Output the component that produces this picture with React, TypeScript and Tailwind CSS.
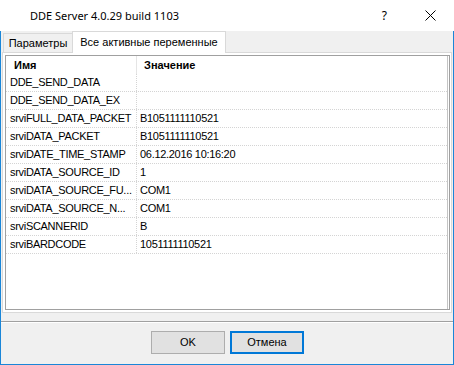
import React from 'react';

const rows: [string, string][] = [
  ['DDE_SEND_DATA', ''],
  ['DDE_SEND_DATA_EX', ''],
  ['srviFULL_DATA_PACKET', 'B1051111110521'],
  ['srviDATA_PACKET', 'B1051111110521'],
  ['srviDATE_TIME_STAMP', '06.12.2016 10:16:20'],
  ['srviDATA_SOURCE_ID', '1'],
  ['srviDATA_SOURCE_FU...', 'COM1'],
  ['srviDATA_SOURCE_N...', 'COM1'],
  ['srviSCANNERID', 'B'],
  ['srviBARDCODE', '1051111110521']
];

export default function App() {
  return (
    <div className="w-[454px] h-[365px] flex flex-col bg-white text-black font-['Liberation_Sans',Arial,sans-serif] text-[11px] leading-none overflow-hidden">
      {/* заголовок окна */}
      <div className="h-[31px] shrink-0 flex items-center">
        <span className="ml-[30px] font-['Noto_Sans',sans-serif] text-[11px]">
          DDE Server 4.0.29 build 1103
        </span>
        <span className="ml-auto mr-[38px] font-['Noto_Sans',sans-serif] text-[12px]">
          ?
        </span>
        <svg width="11" height="11" viewBox="0 0 11 11" className="mr-[18px]">
          <path d="M0.5 0.5L10.5 10.5M10.5 0.5L0.5 10.5" stroke="#000" strokeWidth="1" />
        </svg>
      </div>

      {/* тело */}
      <div className="flex-1 flex flex-col bg-[#f0f0f0] border-x border-b border-[#1a86d8] min-h-0">
        {/* вкладки */}
        <div className="h-[21px] shrink-0 flex items-end pl-[2px]">
          <div className="w-[70px] h-[19px] border border-b-0 border-[#d9d9d9] bg-[#f0f0f0] flex items-center justify-center">
            Параметры
          </div>
          <div className="relative z-10 -ml-px -mb-px w-[154px] h-[22px] border border-b-0 border-[#d9d9d9] bg-white flex items-center justify-center">
            Все активные переменные
          </div>
        </div>

        {/* панель вкладки */}
        <div className="mx-px h-[261px] shrink-0 border border-[#d9d9d9] bg-white pt-[2px] pl-[2px] pr-px pb-[2px]">
          <div className="h-full border border-[#a0a0a0] bg-white">
            <div className="h-full mr-px border-r border-[#c4c4c4]">
              {/* шапка */}
              <div className="h-[18px] flex items-center font-bold">
                <div className="w-[131px] h-full pl-[8px] flex items-center border-r border-[#e5e5e5]">
                  Имя
                </div>
                <div className="pl-[7px]">Значение</div>
              </div>
              {rows.map(([name, value], i) => (
                <div
                  key={i}
                  className="h-[18px] flex border-b border-dotted border-[#d4d4d4] tracking-[-0.3px]"
                >
                  <div className="w-[131px] h-full pl-[4px] flex items-center border-r border-dotted border-[#d4d4d4] whitespace-nowrap overflow-hidden">
                    {name}
                  </div>
                  <div className="pl-[3px] flex items-center whitespace-nowrap">
                    {value}
                  </div>
                </div>
              ))}
            </div>
          </div>
        </div>

        {/* разделитель */}
        <div className="mt-[8px] h-[2px] shrink-0 border-t border-[#a0a0a0] border-b border-b-white" />

        {/* кнопки */}
        <div className="flex-1 pt-[8px] pl-[150px] flex items-start gap-[5px]">
          <button className="w-[74px] h-[23px] border border-[#adadad] bg-[#e1e1e1] flex items-center justify-center">
            OK
          </button>
          <button className="w-[74px] h-[23px] border-2 border-[#0078d7] bg-[#e1e1e1] flex items-center justify-center">
            Отмена
          </button>
        </div>
      </div>
    </div>
  );
}
